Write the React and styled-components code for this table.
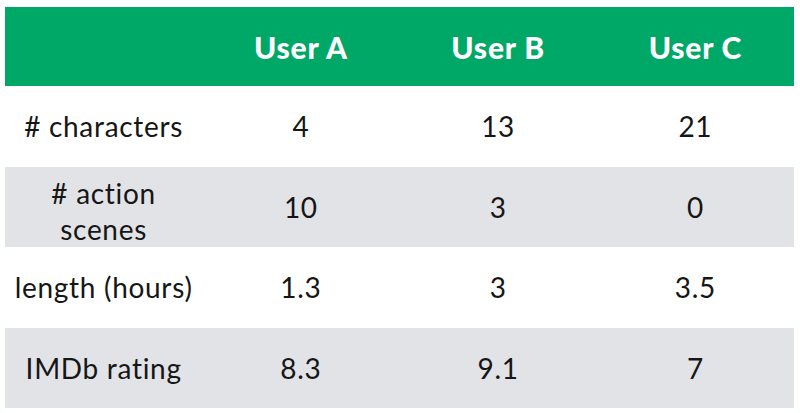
import React from 'react';
import styled, { createGlobalStyle } from 'styled-components';

const GlobalStyle = createGlobalStyle`
  body {
    margin: 0;
    background: #ffffff;
    font-family: 'Lato', 'Liberation Sans', sans-serif;
  }
`;

const Page = styled.div`
  padding: 7px 6px 5px 5px;
`;

const Table = styled.table`
  width: 789px;
  border-collapse: collapse;
  table-layout: fixed;
`;

const HeadRow = styled.tr`
  height: 79px;
  background: #00a867;
`;

const HeadCell = styled.th`
  color: #ffffff;
  font-size: 30px;
  font-weight: 900;
  letter-spacing: 0.8px;
  text-align: center;
  padding: 0;
`;

const Row = styled.tr`
  height: 80.5px;
  background: ${(p) => (p.$shaded ? '#e2e3e7' : '#ffffff')};
`;

const Cell = styled.td`
  color: #161616;
  font-size: 28px;
  font-weight: 400;
  letter-spacing: 0.7px;
  line-height: ${(p) => (p.$wrap ? '36px' : '40px')};
  padding: ${(p) => (p.$wrap ? '8px 0 0' : '0')};
  text-align: center;
`;

const rows = [
  { label: '# characters', values: ['4', '13', '21'] },
  { label: '# action scenes', values: ['10', '3', '0'], wrap: true },
  { label: 'length (hours)', values: ['1.3', '3', '3.5'] },
  { label: 'IMDb rating', values: ['8.3', '9.1', '7'] },
];

export default function App() {
  return (
    <Page>
      <GlobalStyle />
      <Table>
        <thead>
          <HeadRow>
            <HeadCell />
            <HeadCell>User A</HeadCell>
            <HeadCell>User B</HeadCell>
            <HeadCell>User C</HeadCell>
          </HeadRow>
        </thead>
        <tbody>
          {rows.map((r, i) => (
            <Row key={r.label} $shaded={i % 2 === 1}>
              <Cell $wrap={r.wrap}>
                {r.wrap ? (
                  <>
                    # action
                    <br />
                    scenes
                  </>
                ) : (
                  r.label
                )}
              </Cell>
              {r.values.map((v, j) => (
                <Cell key={j}>{v}</Cell>
              ))}
            </Row>
          ))}
        </tbody>
      </Table>
    </Page>
  );
}
